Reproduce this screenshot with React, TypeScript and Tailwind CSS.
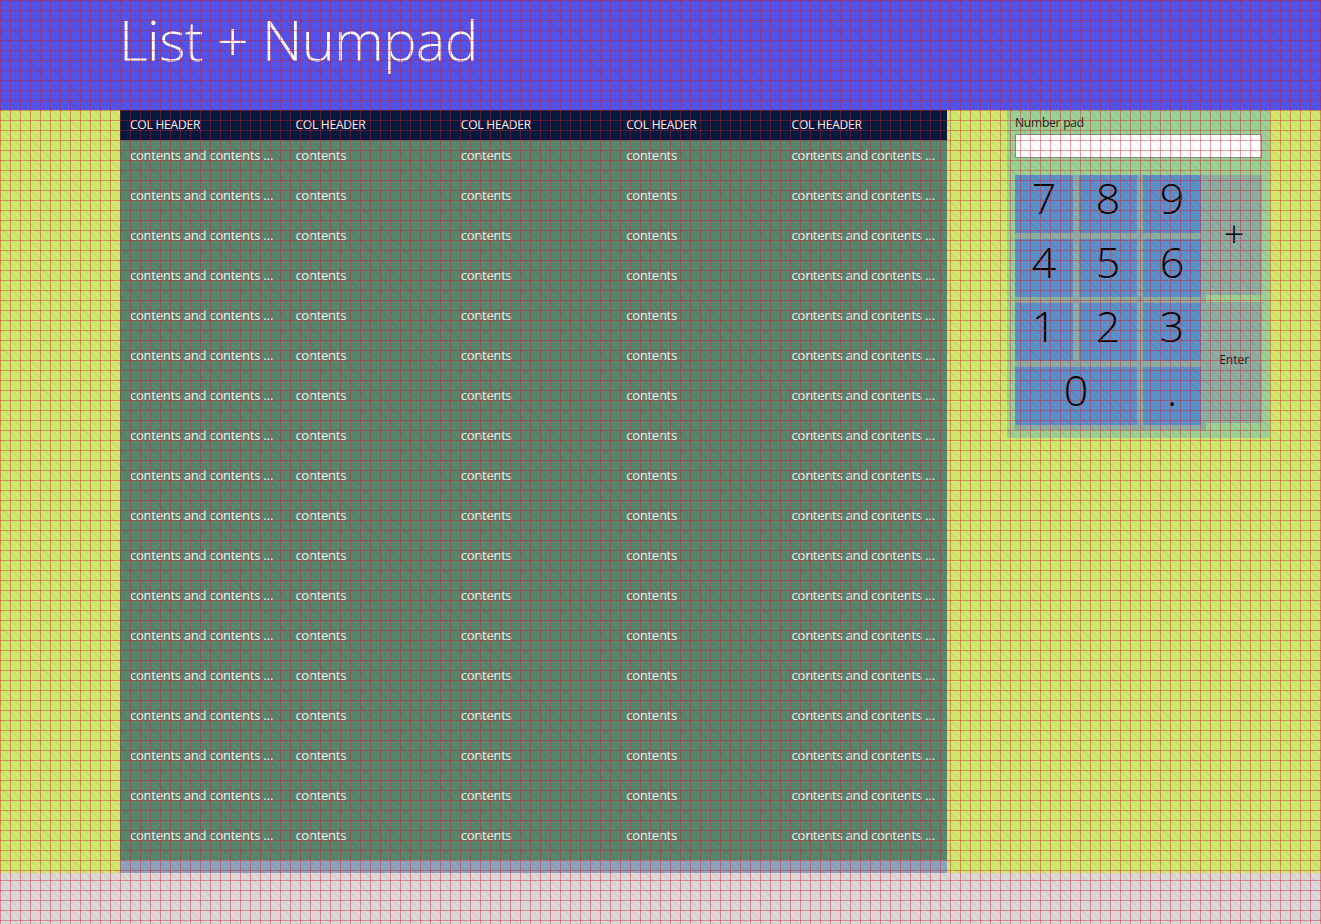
import React from "react"

const font = { fontFamily: '"Open Sans", "Noto Sans", sans-serif' }

const cols = [
  "contents and contents and contents",
  "contents",
  "contents",
  "contents",
  "contents and contents and contents",
]

function ListTable() {
  const rows = Array.from({ length: 18 })
  return (
    <div className="w-[827px] flex flex-col bg-[#8ea3bb]">
      <div className="h-[30px] grid grid-cols-5 bg-[#031a40] text-white text-[12px] tracking-[-0.2px] items-center">
        {cols.map((_, i) => (
          <div key={i} className="pl-[10px] uppercase">
            Col header
          </div>
        ))}
      </div>
      <div className="flex flex-col bg-[#56866d]">
        {rows.map((_, r) => (
          <div key={r} className="h-[40px] grid grid-cols-5 text-[13px] tracking-[-0.25px] text-[#f2f2f2]">
            {cols.map((c, i) => (
              <div key={i} className="pl-[10px] pr-[10px] pt-[6px] truncate">
                {c}
              </div>
            ))}
          </div>
        ))}
      </div>
      <div className="flex-1" />
    </div>
  )
}

function Key({ label, className = "" }: { label: string; className?: string }) {
  return (
    <div
      className={
        "bg-[#5b90cc] flex items-start justify-center text-[43px] font-light leading-[46px] text-black " +
        className
      }
    >
      {label}
    </div>
  )
}

function NumberPad() {
  return (
    <div className="w-[263px] self-start bg-[#9ad194] px-[8px] pt-[5px] pb-[8px] flex flex-col">
      <div className="text-[12px] text-[#1a1a1a] leading-[16px] tracking-[-0.2px]">Number pad</div>
      <div className="mt-[3px] h-[24px] w-[247px] bg-white border border-[#8a8a8a]" />
      <div className="mt-[17px] flex">
        <div className="w-[192px] h-[255px] bg-[#8cada3] grid grid-cols-[58px_58px_58px] grid-rows-[58px_58px_58px_58px] gap-[6px]">
          <Key label="7" />
          <Key label="8" />
          <Key label="9" />
          <Key label="4" />
          <Key label="5" />
          <Key label="6" />
          <Key label="1" />
          <Key label="2" />
          <Key label="3" />
          <Key label="0" className="col-span-2" />
          <Key label="." />
        </div>
        <div className="w-[56px] flex flex-col">
          <div className="h-[120px] bg-[#8cada3] flex items-center justify-center text-[36px] font-light text-black leading-none pb-[2px]">
            +
          </div>
          <div className="h-[121px] mt-[7px] bg-[#8cada3] flex items-center justify-center text-[12px] text-[#1a1a1a] pb-[6px]">
            Enter
          </div>
        </div>
      </div>
    </div>
  )
}

export default function App() {
  return (
    <div className="relative w-full h-[924px] flex flex-col overflow-hidden" style={font}>
      <header className="h-[110px] bg-[#5252ec] pl-[119px]">
        <h1 className="text-[56px] font-light text-white leading-none pt-[11px] tracking-[-0.6px]">List + Numpad</h1>
      </header>
      <main className="flex-1 bg-[#cfe96f] flex pl-[120px] gap-[60px]">
        <ListTable />
        <NumberPad />
      </main>
      <footer className="h-[51px] bg-[#dcd8d9]" />
      <div className="pointer-events-none absolute inset-0 [background-image:repeating-linear-gradient(45deg,rgba(0,0,0,0.05)_0px,rgba(0,0,0,0.05)_1px,transparent_1px,transparent_6px)]" />
      <div className="pointer-events-none absolute inset-0 [background-image:linear-gradient(to_right,rgba(200,30,40,0.42)_1px,transparent_1px),linear-gradient(to_bottom,rgba(200,30,40,0.42)_1px,transparent_1px)] [background-size:10px_10px]" />
    </div>
  )
}
